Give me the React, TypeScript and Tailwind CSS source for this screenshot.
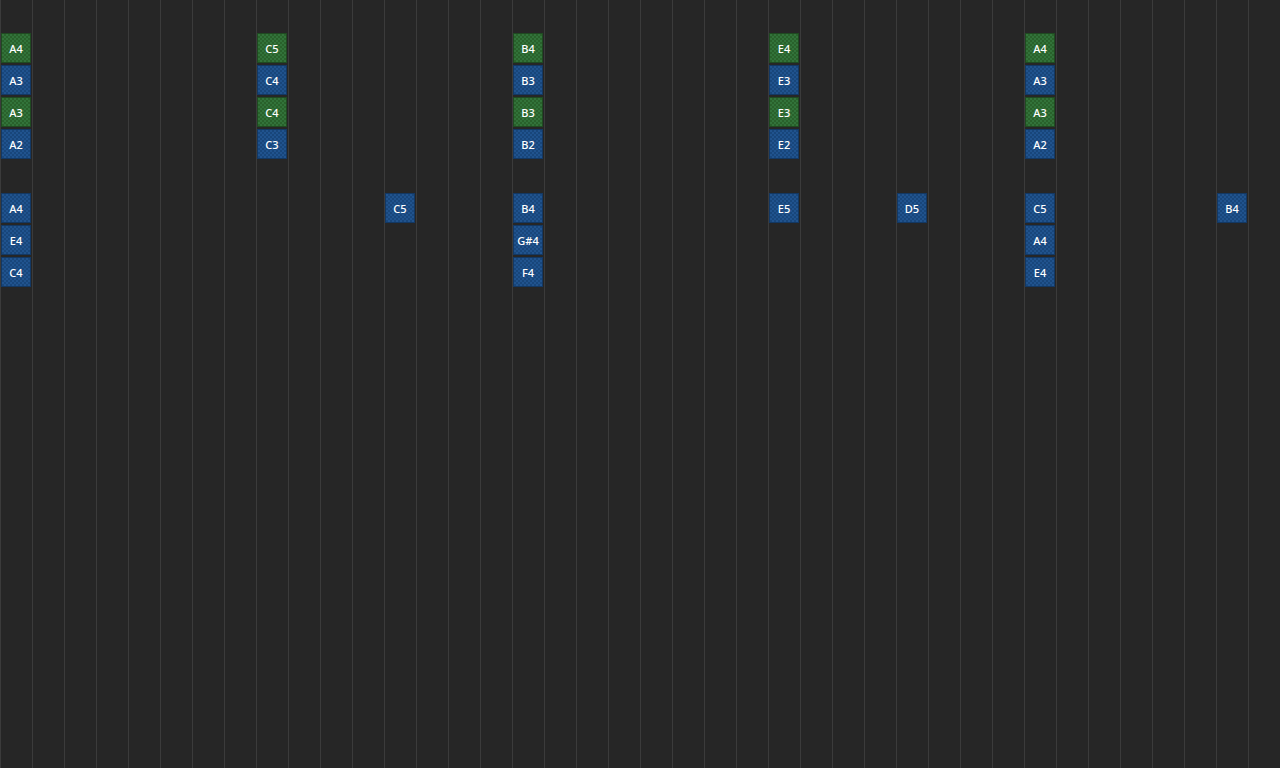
type Note = { col: number; row: number; label: string; green?: boolean };

const chord = (col: number, a: string, b: string, c: string, d: string): Note[] => [
  { col, row: 1, label: a, green: true },
  { col, row: 2, label: b },
  { col, row: 3, label: c, green: true },
  { col, row: 4, label: d },
];

const notes: Note[] = [
  ...chord(0, 'A4', 'A3', 'A3', 'A2'),
  ...chord(8, 'C5', 'C4', 'C4', 'C3'),
  ...chord(16, 'B4', 'B3', 'B3', 'B2'),
  ...chord(24, 'E4', 'E3', 'E3', 'E2'),
  ...chord(32, 'A4', 'A3', 'A3', 'A2'),
  { col: 0, row: 6, label: 'A4' },
  { col: 12, row: 6, label: 'C5' },
  { col: 16, row: 6, label: 'B4' },
  { col: 24, row: 6, label: 'E5' },
  { col: 28, row: 6, label: 'D5' },
  { col: 32, row: 6, label: 'C5' },
  { col: 38, row: 6, label: 'B4' },
  { col: 0, row: 7, label: 'E4' },
  { col: 16, row: 7, label: 'G#4' },
  { col: 32, row: 7, label: 'A4' },
  { col: 0, row: 8, label: 'C4' },
  { col: 16, row: 8, label: 'F4' },
  { col: 32, row: 8, label: 'E4' },
];

export default function App() {
  return (
    <div className="w-[1280px] h-[768px] overflow-hidden bg-[#262626] bg-[repeating-linear-gradient(to_right,#3b3b3b_0_1px,transparent_1px_32px)] grid grid-cols-[repeat(40,32px)] grid-rows-[repeat(24,32px)] font-['Open_Sans','Liberation_Sans',sans-serif]">
      {notes.map((n, i) => (
        // grid position comes from the note data
        <div key={i} className="p-px" style={{ gridColumn: n.col + 1, gridRow: n.row + 1 }}>
          <div
            className={
              'w-[30px] h-[30px] pt-[2px] flex items-center justify-center text-[11px] font-medium text-white border bg-[length:4px_4px] ' +
              (n.green
                ? 'bg-[#2d6a2f] border-[#1f4a21] bg-[repeating-conic-gradient(#29612b_0_25%,#32733a_0_50%)]'
                : 'bg-[#1b4b82] border-[#133863] bg-[repeating-conic-gradient(#18467b_0_25%,#20538e_0_50%)]')
            }
          >
            {n.label}
          </div>
        </div>
      ))}
    </div>
  );
}
